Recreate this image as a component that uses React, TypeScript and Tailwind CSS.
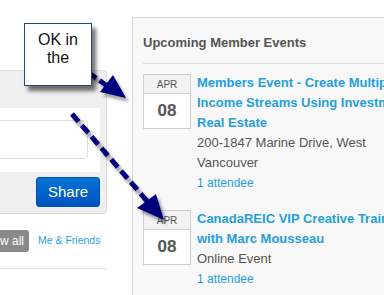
import React from 'react';

const events = [
  {
    title: ['Members Event - Create Multiple', 'Income Streams Using Investment', 'Real Estate'],
    place: ['200-1847 Marine Drive, West', 'Vancouver'],
  },
  {
    title: ['CanadaREIC VIP Creative Training', 'with Marc Mousseau'],
    place: ['Online Event'],
  },
];

function DateBox() {
  return (
    <div className="w-[48px] h-[55px] shrink-0 border border-[#cfcfcf] bg-white flex flex-col">
      <div className="h-[19px] bg-[#f2f2f2] border-b border-[#d6d6d6] flex items-center justify-center text-[10px] text-[#555]">
        APR
      </div>
      <div className="flex-1 flex items-center justify-center text-[17px] font-bold text-[#555]">08</div>
    </div>
  );
}

function Arrows() {
  const shapes = (
    <>
      <line x1="89" y1="73" x2="110" y2="88" stroke="currentColor" strokeWidth="5" strokeDasharray="9 4" />
      <polygon points="113,75 100,92 126,98" fill="currentColor" />
      <line x1="72" y1="114" x2="147" y2="201" stroke="currentColor" strokeWidth="5" strokeDasharray="10 5" />
      <polygon points="137,208 156,194 164,220" fill="currentColor" />
    </>
  );
  return (
    <svg className="absolute inset-0 pointer-events-none" width="384" height="295">
      <defs>
        <filter id="blur" x="-20%" y="-20%" width="140%" height="140%">
          <feGaussianBlur stdDeviation="1.6" />
        </filter>
      </defs>
      <g transform="translate(3 4)" className="text-[#000000]" opacity="0.35" filter="url(#blur)">
        {shapes}
      </g>
      <g className="text-[#00007f]">{shapes}</g>
    </svg>
  );
}

export default function App() {
  return (
    <div className="relative w-[384px] h-[295px] overflow-hidden bg-white font-['Liberation_Sans',Arial,sans-serif]">
      <div className="flex items-start">
        {/* Left column */}
        <div className="w-[127px] shrink-0 ml-[-20px]">
          <div className="w-[127px] mt-[70px] h-[144px] bg-[#efefef] border border-[#dcdcdc] rounded-[3px] flex flex-col">
            <div className="h-[37px]" />
            <div className="h-[64px] mr-[6px] bg-white pt-[12px] pr-[12px]">
              <div className="h-[39px] border border-[#dedede] rounded-[4px] bg-white" />
            </div>
            <div className="flex justify-end mr-[6px] mt-[5px]">
              <button className="w-[64px] h-[30px] rounded-[3px] bg-gradient-to-b from-[#0a74d6] to-[#0052c2] border border-[#0050b0] text-white text-[15px] flex items-center justify-center">
                Share
              </button>
            </div>
          </div>
          <div className="flex items-center mt-[16px] h-[22px] whitespace-nowrap">
            <div className="w-[49px] h-[22px] rounded-[3px] bg-[#8a8a8a] text-white text-[12px] flex items-center justify-end pr-[5px]">
              View all
            </div>
            <span className="ml-[9px] text-[10.5px] text-[#2a9fdf]">Me &amp; Friends</span>
          </div>
          <div className="mt-[16px] border-t border-[#dddddd] w-[127px]" />
        </div>

        {/* Right panel */}
        <div className="ml-[25px] mt-[17px] w-[300px] shrink-0 h-[300px] bg-[#f8f8f8] border border-[#dadada] pl-[10px] pt-[15px]">
          <div className="text-[13px] font-bold text-[#555] leading-[20px]">Upcoming Member Events</div>
          <div className="mt-[10px] border-t border-[#dcdcdc]" />
          <div className="flex flex-col gap-[17px] mt-[10px]">
            {events.map((ev, i) => (
              <div key={i} className="flex items-start gap-[6px]">
                <DateBox />
                <div className="mt-[-1px] whitespace-nowrap">
                  {ev.title.map((t) => (
                    <div key={t} className="text-[13px] font-bold text-[#259fdd] leading-[20px]">
                      {t}
                    </div>
                  ))}
                  {ev.place.map((p) => (
                    <div key={p} className="text-[13px] text-[#555] leading-[20px]">
                      {p}
                    </div>
                  ))}
                  <div className="text-[12px] text-[#2a9fdf] leading-[20px]">1 attendee</div>
                </div>
              </div>
            ))}
          </div>
        </div>
      </div>

      <Arrows />

      {/* Callout */}
      <div className="absolute left-[24px] top-[23px] w-[68px] h-[63px] bg-white border border-[#23497a] shadow-[4px_5px_4px_rgba(0,0,0,0.55)] pt-[7px] text-center text-[16px] leading-[18px] text-[#111]">
        OK in
        <br />
        the
      </div>
    </div>
  );
}
